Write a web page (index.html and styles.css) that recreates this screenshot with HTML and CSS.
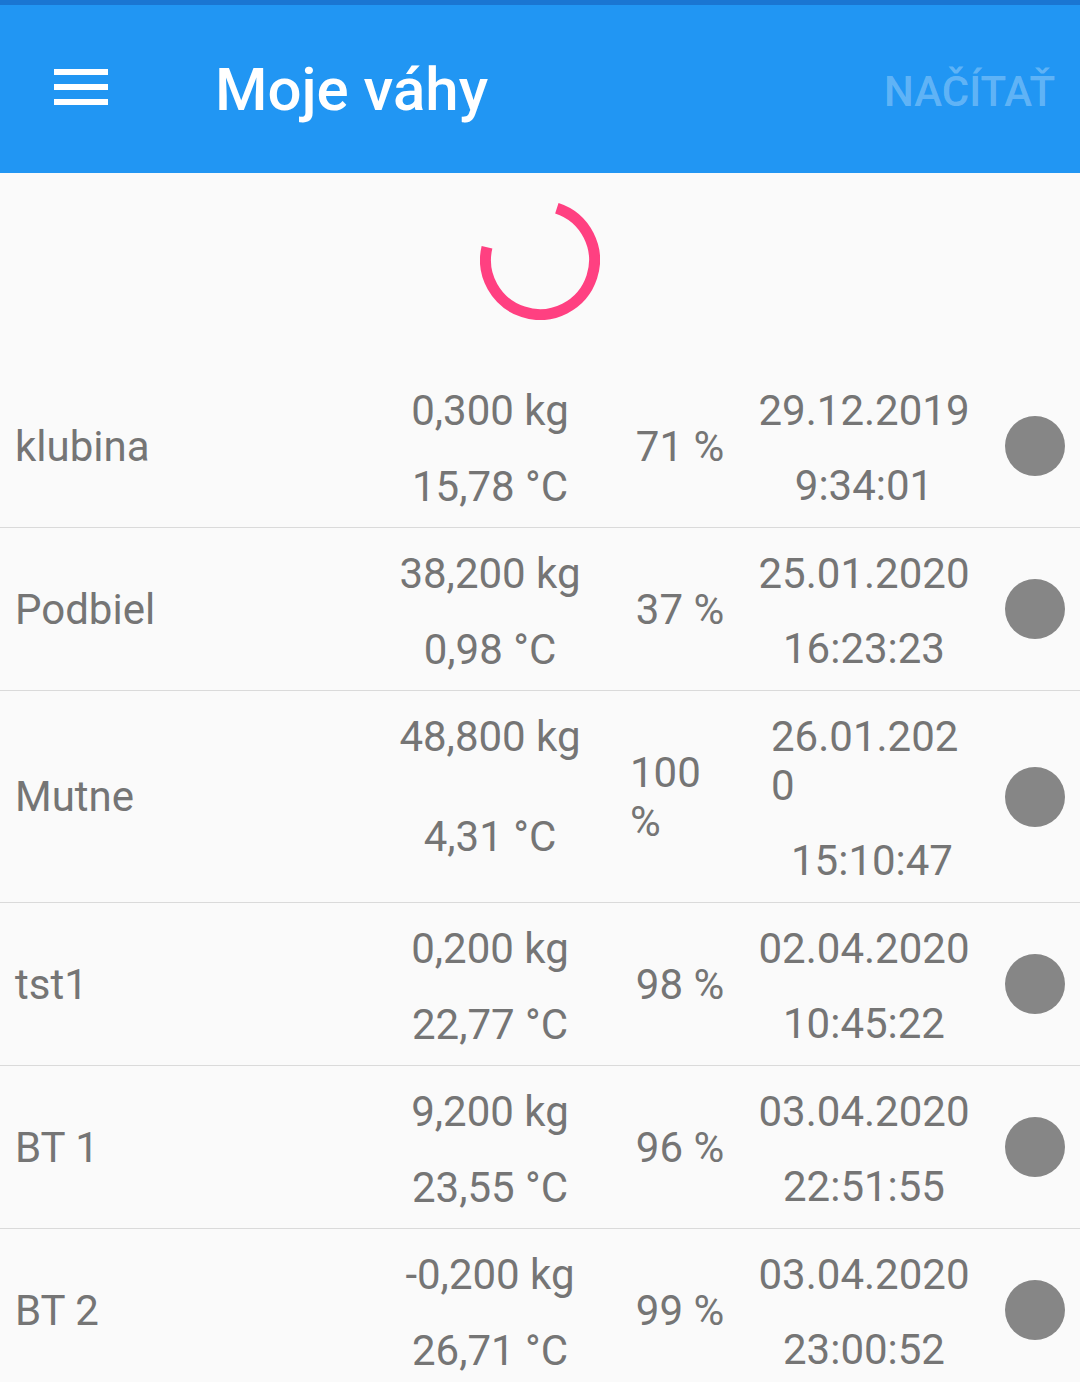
FILE: index.html
```html
<!DOCTYPE html>
<html lang="sk">
<head>
    <meta charset="UTF-8">
    <meta name="viewport" content="width=device-width, initial-scale=1.0">
    <title>Moje váhy</title>
    <link rel="stylesheet" href="styles.css">
</head>
<body>
    <div class="status-strip"></div>
    <header class="toolbar">
        <button class="menu-button" aria-label="Menu">
            <svg width="54" height="36" viewBox="3 6 18 12">
                <rect x="3" y="6" width="18" height="2" fill="#fff"/>
                <rect x="3" y="11" width="18" height="2" fill="#fff"/>
                <rect x="3" y="16" width="18" height="2" fill="#fff"/>
            </svg>
        </button>
        <h1 class="title">Moje váhy</h1>
        <span class="action">NAČÍTAŤ</span>
    </header>

    <div class="loader">
        <svg width="120" height="120" viewBox="0 0 120 120">
            <circle cx="60" cy="60" r="54.5" fill="none" stroke="#ff4081" stroke-width="11"
                    stroke-dasharray="252 91" transform="rotate(-72 60 60)"/>
        </svg>
    </div>

    <ul class="scales">
        <li class="row">
            <div class="name">klubina</div>
            <div class="weight"><span class="w-top">0,300 kg</span><span class="w-bottom">15,78 °C</span></div>
            <div class="pct"><span>71 %</span></div>
            <div class="date"><span>29.12.2019</span><span class="time">9:34:01</span></div>
            <div class="dot"></div>
        </li>
        <li class="row">
            <div class="name">Podbiel</div>
            <div class="weight"><span class="w-top">38,200 kg</span><span class="w-bottom">0,98 °C</span></div>
            <div class="pct"><span>37 %</span></div>
            <div class="date"><span>25.01.2020</span><span class="time">16:23:23</span></div>
            <div class="dot"></div>
        </li>
        <li class="row row--narrow">
            <div class="name">Mutne</div>
            <div class="weight"><span class="w-top">48,800 kg</span><span class="w-bottom">4,31 °C</span></div>
            <div class="pct"><span>100 %</span></div>
            <div class="date"><span>26.01.2020</span><span class="time">15:10:47</span></div>
            <div class="dot"></div>
        </li>
        <li class="row">
            <div class="name">tst1</div>
            <div class="weight"><span class="w-top">0,200 kg</span><span class="w-bottom">22,77 °C</span></div>
            <div class="pct"><span>98 %</span></div>
            <div class="date"><span>02.04.2020</span><span class="time">10:45:22</span></div>
            <div class="dot"></div>
        </li>
        <li class="row">
            <div class="name">BT 1</div>
            <div class="weight"><span class="w-top">9,200 kg</span><span class="w-bottom">23,55 °C</span></div>
            <div class="pct"><span>96 %</span></div>
            <div class="date"><span>03.04.2020</span><span class="time">22:51:55</span></div>
            <div class="dot"></div>
        </li>
        <li class="row">
            <div class="name">BT 2</div>
            <div class="weight"><span class="w-top">-0,200 kg</span><span class="w-bottom">26,71 °C</span></div>
            <div class="pct"><span>99 %</span></div>
            <div class="date"><span>03.04.2020</span><span class="time">23:00:52</span></div>
            <div class="dot"></div>
        </li>
    </ul>
</body>
</html>
```

FILE: styles.css
```css
:root {
    --primary: #2196f3;
    --primary-dark: #1a76d2;
    --background: #fafafa;
    --text: #757575;
    --divider: #dadada;
    --dot: #868686;
}

* {
    box-sizing: border-box;
}

body {
    margin: 0;
    background-color: var(--background);
    font-family: Roboto, "Liberation Sans", sans-serif;
    color: var(--text);
}

.status-strip {
    height: 5px;
    background-color: var(--primary-dark);
}

.toolbar {
    height: 168px;
    background-color: var(--primary);
    display: flex;
    align-items: center;
    padding: 0 25px 0 54px;
}

.menu-button {
    padding: 0;
    border: none;
    background: none;
    display: flex;
    margin-top: -4px;
}

.title {
    margin: 0 0 0 107px;
    flex: 1;
    font-size: 60px;
    font-weight: 500;
    color: #fff;
}

.action {
    font-size: 42px;
    font-weight: 500;
    color: rgba(255, 255, 255, 0.3);
    margin-top: 4px;
}

.loader {
    display: flex;
    justify-content: center;
    padding: 27px 0 45px;
}

.loader svg {
    display: block;
}

.scales {
    list-style: none;
    margin: 0;
    padding: 0;
}

.row {
    display: flex;
    align-items: center;
    padding: 0 15px 0 15px;
    border-bottom: 1px solid var(--divider);
    font-size: 42px;
    line-height: 49px;
}

.name {
    flex: 1;
}

.weight {
    align-self: stretch;
    width: 200px;
    padding-top: 21px;
    display: flex;
    flex-direction: column;
    align-items: center;
}

.w-top {
    margin-bottom: 10px;
}

.w-bottom {
    flex: 1;
    display: flex;
    align-items: center;
}

.pct {
    width: 100px;
    margin-left: 40px;
    text-align: center;
}

.date {
    width: 220px;
    margin-left: 24px;
    padding: 21px 0 17px;
    display: flex;
    flex-direction: column;
    align-items: center;
}

.pct span,
.date span {
    display: inline-block;
    text-align: left;
    overflow-wrap: anywhere;
}

.date .time {
    margin-top: 26px;
}

.dot {
    width: 60px;
    height: 60px;
    margin-left: 31px;
    border-radius: 50%;
    background-color: var(--dot);
}

.row--narrow .pct {
    margin-left: 40px;
}

.row--narrow .date {
    width: 202px;
    margin-left: 41px;
}

.row--narrow .dot {
    margin-left: 32px;
}
```
